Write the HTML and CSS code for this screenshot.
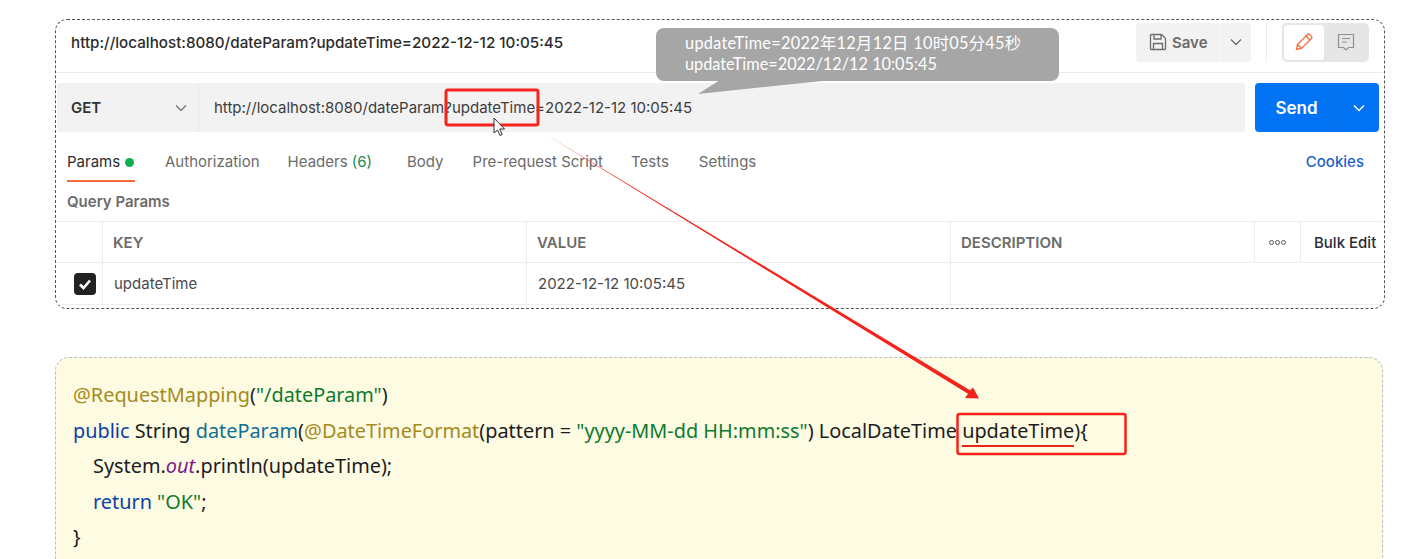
FILE: index.html
```html
<!DOCTYPE html>
<html lang="zh">
<head>
<meta charset="utf-8">
<title>dateParam</title>
<link rel="stylesheet" href="styles.css">
</head>
<body>
<main class="page">
  <section class="pm">
    <header class="pm-title">
      <h1 class="pm-name">http://localhost:8080/dateParam?updateTime=2022-12-12 10:05:45</h1>
      <div class="save">
        <span class="save-main">
          <svg class="ic-save" viewBox="0 0 18 18" width="18" height="18" fill="none" stroke="#6b6b6b" stroke-width="1.3"><path d="M1.5 2.500a1 1 0 0 1 1-1h10l4 4v10a1 1 0 0 1-1 1h-13a1 1 0 0 1-1-1z"/><path d="M5 1.500v4.500h7V1.500M4.500 16.500V10.500h9v6"/></svg>
          Save
        </span>
        <span class="save-more"><svg viewBox="0 0 12 8" width="12" height="8" fill="none" stroke="#6b6b6b" stroke-width="1.3"><path d="M1 1.500l5 5 5-5"/></svg></span>
      </div>
      <span class="vsep"></span>
      <div class="mode">
        <span class="mode-on"><svg viewBox="0 0 20 20" width="20" height="20" fill="none" stroke="#f26b3a" stroke-width="1.300"><path d="M2.500 17.500l1-5L13.500 2.500a1.500 1.500 0 0 1 2.100 0l1.900 1.900a1.500 1.500 0 0 1 0 2.100L7.500 16.500z"/><path d="M12 4l4 4M3.500 12.500l4 4"/></svg></span>
        <span class="mode-off"><svg viewBox="0 0 20 20" width="20" height="20" fill="none" stroke="#8f8f8f" stroke-width="1.200"><path d="M2.500 2.500h15v13h-5l-2.500 2.500-2.500-2.500h-5z"/><path d="M6 6.500h8M6 10h5"/></svg></span>
      </div>
    </header>

    <div class="req">
      <div class="req-bar">
        <div class="method">GET <svg viewBox="0 0 12 8" width="12" height="8" fill="none" stroke="#6b6b6b" stroke-width="1.200"><path d="M1 1.500l5 5 5-5"/></svg></div>
        <div class="url">http://localhost:8080/dateParam?updateTime=2022-12-12 10:05:45</div>
      </div>
      <div class="send">
        <span class="send-main">Send</span>
        <span class="send-more"><svg viewBox="0 0 12 8" width="12" height="8" fill="none" stroke="#fff" stroke-width="1.400"><path d="M1 1.500l5 5 5-5"/></svg></span>
      </div>
    </div>

    <nav class="tabs">
      <span class="tab tab-on">Params <i class="dot"></i></span>
      <span class="tab t-auth">Authorization</span>
      <span class="tab t-head">Headers <em>(6)</em></span>
      <span class="tab t-body">Body</span>
      <span class="tab t-pre">Pre-request Script</span>
      <span class="tab t-tests">Tests</span>
      <span class="tab t-set">Settings</span>
      <span class="cookies">Cookies</span>
    </nav>

    <h2 class="qp">Query Params</h2>

    <div class="tbl">
      <div class="cell"></div>
      <div class="cell th">KEY</div>
      <div class="cell th">VALUE</div>
      <div class="cell th">DESCRIPTION</div>
      <div class="cell more"><i></i><i></i><i></i></div>
      <div class="cell bulk">Bulk Edit</div>
      <div class="cell chk"><span class="box"><svg viewBox="0 0 14 12" width="14" height="12" fill="none" stroke="#fff" stroke-width="2.600"><path d="M2 6.500l3.500 3.500L12 2.500"/></svg></span></div>
      <div class="cell td">updateTime</div>
      <div class="cell td">2022-12-12 10:05:45</div>
      <div class="cell wide"></div>
    </div>
  </section>

  <section class="code">
    <p><span class="an">@RequestMapping</span>(<span class="st">"/dateParam"</span>)</p>
    <p><span class="kw">public</span> String <span class="fn">dateParam</span>(<span class="an">@DateTimeFormat</span>(pattern = <span class="st">"yyyy-MM-dd HH:mm:ss"</span>) LocalDateTime <span class="ul">updateTime</span>){</p>
    <p class="in">System.<i class="out">out</i>.println(updateTime);</p>
    <p class="in"><span class="kw">return</span> <span class="st">"OK"</span>;</p>
    <p>}</p>
  </section>

  <div class="callout">
    <div class="cl-cn">updateTime=2022年12月12日 10时05分45秒</div>
    <div>updateTime=2022/12/12 10:05:45</div>
  </div>

  <svg class="marks" viewBox="0 0 1402 559" width="1402" height="559" fill="none">
    <path d="M720 80h112L698 94z" fill="#a6a6a6"/>
    <rect x="446" y="90" width="92" height="35" rx="2" stroke="#f5231b" stroke-width="3"/>
    <rect x="957.500" y="414" width="168" height="40" rx="2" stroke="#f5231b" stroke-width="2.500"/>
    <path d="M545 134L970 390.300 973 387.500 979 398.500 965 398 968 393.700z" fill="#f5231b"/>
    <path d="M494 118v15l3.500-3 2.500 5.500 2.200-1-2.500-5.500h4.800z" fill="#fff" stroke="#333" stroke-width="1"/>
  </svg>
</main>
</body>
</html>
```
FILE: styles.css
```css
* { box-sizing: border-box; }
html, body { margin: 0; padding: 0; background: #fff; }
.page {
  position: relative;
  width: 1402px;
  height: 559px;
  overflow: hidden;
  padding: 19px 0 0 55px;
  font-family: Inter, "Liberation Sans", sans-serif;
}
.pm {
  width: 1330px;
  height: 290px;
  border: 1px dashed #555;
  border-radius: 12px;
  padding: 0;
  color: #6b6b6b;
  font-size: 15px;
}
.pm-title {
  display: flex;
  align-items: center;
  height: 53px;
  margin-right: 1px;
  border-bottom: 1px solid #ececec;
  padding: 0 14px 8px 15px;
}
.pm-name {
  flex: 1;
  margin: 0;
  font-size: 15.200px;
  font-weight: 500;
  color: #2b2b2b;
}
.save {
  display: flex;
  height: 39px;
  border-radius: 4px;
  background: #f2f2f2;
  color: #6b6b6b;
  font-weight: 600;
}
.save-main {
  display: flex;
  align-items: center;
  gap: 5px;
  width: 85px;
  padding-left: 13px;
  border-right: 1px solid #fafafa;
}
.save-more {
  display: flex;
  align-items: center;
  justify-content: center;
  width: 30px;
}
.vsep {
  width: 1px;
  height: 39px;
  margin: 0 15px;
  background: #ececec;
}
.mode {
  display: flex;
  width: 87px;
  height: 39px;
  padding: 2px;
  border-radius: 5px;
  background: #e6e6e6;
}
.mode-on, .mode-off {
  display: flex;
  align-items: center;
  justify-content: center;
}
.mode-on { width: 40px; background: #fff; border-radius: 4px; }
.mode-off { flex: 1; }
.req {
  display: flex;
  gap: 10px;
  margin: 10px 5px 0 1px;
  height: 49px;
}
.req-bar {
  display: flex;
  flex: 1;
  border-radius: 3px;
  background: #f2f2f2;
}
.method {
  display: flex;
  align-items: center;
  justify-content: space-between;
  width: 142px;
  padding: 0 11px 0 14px;
  border-right: 1px solid #e8e8e8;
  font-weight: 600;
  color: #333;
}
.url {
  display: flex;
  align-items: center;
  padding-left: 15px;
  color: #3d3d3d;
}
.send {
  display: flex;
  width: 124px;
  border-radius: 4px;
  background: #0373f5;
  color: #fff;
}
.send-main {
  display: flex;
  align-items: center;
  justify-content: center;
  width: 84px;
  font-size: 17px;
  font-weight: 600;
  border-right: 1px solid #0b6de0;
}
.send-more {
  display: flex;
  flex: 1;
  align-items: center;
  justify-content: center;
}
.tabs {
  display: flex;
  align-items: flex-start;
  height: 50px;
  padding: 20px 0 0 11px;
  margin-right: 20px;
}
.tab { white-space: nowrap; line-height: 20px; }
.tab em { font-style: normal; color: #1c8a5b; }
.tab-on {
  display: flex;
  align-items: flex-start;
  gap: 5px;
  width: 68px;
  height: 30px;
  color: #2b2b2b;
  border-bottom: 2px solid #f26b3a;
}
.dot {
  width: 9px;
  height: 9px;
  margin-top: 6px;
  border-radius: 50%;
  background: #0cb04f;
}
.t-auth { margin-left: 30px; }
.t-head { margin-left: 28px; }
.t-body { margin-left: 35px; }
.t-pre { margin-left: 29px; }
.t-tests { margin-left: 28px; }
.t-set { margin-left: 30px; }
.cookies {
  margin-left: auto;
  line-height: 20px;
  font-weight: 500;
  color: #1d62c9;
}
.qp {
  margin: 0;
  height: 39px;
  padding-left: 11px;
  padding-top: 10px;
  font-size: 15px;
  font-weight: 600;
  line-height: 20px;
  color: #6b6b6b;
}
.tbl {
  display: grid;
  grid-template-columns: 47px 424px 424px 304px 46px 83px;
  grid-template-rows: 41px 42px;
  border-top: 1px solid #ededed;
  margin-right: 1px;
}
.cell {
  display: flex;
  align-items: center;
  border-right: 1px solid #ededed;
  border-bottom: 1px solid #ededed;
  padding-left: 10px;
  white-space: nowrap;
  overflow: hidden;
}
.cell.wide { grid-column: span 3; border-right: 0; }
.th { font-weight: 600; color: #6b6b6b; }
.td { padding-left: 11px; color: #4a4a4a; }
.more { justify-content: center; gap: 1px; padding: 0; }
.more i {
  width: 5px;
  height: 5px;
  border: 1px solid #555;
  border-radius: 50%;
}
.bulk { border-right: 0; padding-left: 13px; font-weight: 500; color: #2b2b3a; }
.chk { padding: 0 0 0 18px; }
.box {
  display: flex;
  align-items: center;
  justify-content: center;
  width: 22px;
  height: 22px;
  border-radius: 4px;
  background: #222;
}
.code {
  width: 1328px;
  height: 230px;
  margin-top: 48px;
  padding: 19px 17px 0;
  border: 1px dashed #bdbdbd;
  border-radius: 14px;
  background: #fefbe3;
  font-family: "Noto Sans", "Noto Sans CJK SC", sans-serif;
  font-size: 19.870px;
  color: #1d1d1d;
}
.code p { margin: 0; height: 35.500px; line-height: 35.500px; white-space: nowrap; }
.code .in { padding-left: 20px; }
.an { color: #a58a1e; }
.st { color: #0e7a2f; }
.kw { color: #0d3fa8; }
.fn { color: #0f6f96; }
.out { color: #7a1a8e; }
.ul { position: relative; }
.ul::after {
  content: "";
  position: absolute;
  left: 0;
  right: 0;
  bottom: -3px;
  height: 2px;
  background: #e8261c;
}
.callout {
  position: absolute;
  left: 656px;
  top: 28px;
  width: 403px;
  height: 53px;
  padding: 4px 0 0 29px;
  border-radius: 8px;
  background: #a6a6a6;
  color: #fff;
  font-family: Lato, "Noto Sans CJK SC", sans-serif;
  font-size: 16.300px;
  line-height: 21px;
}
.cl-cn { letter-spacing: 0.300px; }
.marks { position: absolute; left: 0; top: 0; }
```
